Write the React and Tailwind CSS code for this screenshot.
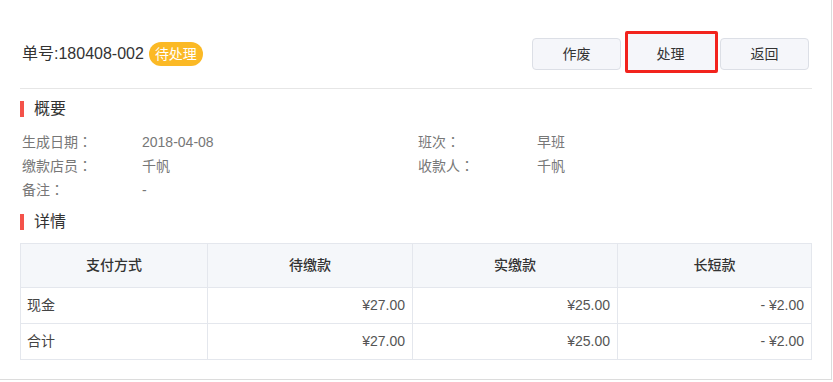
function Colon() {
  return <span className="[font-family:'Noto_Sans_CJK_TC',sans-serif]">：</span>;
}

export default function App() {
  const rows = [
    ["现金", "¥27.00", "¥25.00", "- ¥2.00"],
    ["合计", "¥27.00", "¥25.00", "- ¥2.00"],
  ];
  const headers = ["支付方式", "待缴款", "实缴款", "长短款"];
  return (
    <div className="w-[832px] h-[380px] bg-white border-r border-b border-[#dcdcdc] pl-[20px] [font-family:'Liberation_Sans','Noto_Sans_CJK_SC',sans-serif]">
      <div className="w-[792px]">
        {/* header */}
        <div className="pt-[38px] pb-[18px] border-b border-[#e6e6e6] flex items-center justify-between">
          <div className="flex items-center pl-[2px]">
            <span className="text-[16px] leading-[16px] text-[#333]">单号:180408-002</span>
            <span className="ml-[5px] h-[24px] w-[54px] rounded-full bg-[#fbb925] text-white text-[14px] flex items-center justify-center">
              待处理
            </span>
          </div>
          <div className="flex gap-[5px] mr-[3px]">
            <button className="w-[89px] h-[32px] rounded-[4px] border border-[#dcdfe6] bg-[#f5f6fa] text-[14px] text-[#333]">
              作废
            </button>
            <button className="relative w-[89px] h-[32px] rounded-[4px] border border-[#dcdfe6] bg-[#f5f6fa] text-[14px] text-[#333]">
              <span className="absolute left-[-2px] top-[-8px] w-[93px] h-[42px] rounded-[2px] border-[3px] border-[#f2231d] bg-[#f5f6fa]"></span>
              <span className="relative">处理</span>
            </button>
            <button className="w-[89px] h-[32px] rounded-[4px] border border-[#dcdfe6] bg-[#f5f6fa] text-[14px] text-[#333]">
              返回
            </button>
          </div>
        </div>

        {/* 概要 */}
        <div className="mt-[12px] h-[16px] flex items-center">
          <span className="w-[4px] h-[16px] bg-[#f4524a]"></span>
          <span className="ml-[10px] text-[16px] leading-[16px] text-[#333]">概要</span>
        </div>
        <div className="mt-[13px] grid grid-cols-[396px_396px] pl-[2px] text-[14px] text-[#777]">
          <div className="flex h-[24px] items-center">
            <span className="w-[120px]">生成日期<Colon /></span>
            <span>2018-04-08</span>
          </div>
          <div className="flex h-[24px] items-center">
            <span className="w-[119px]">班次<Colon /></span>
            <span>早班</span>
          </div>
          <div className="flex h-[24px] items-center">
            <span className="w-[120px]">缴款店员<Colon /></span>
            <span>千帆</span>
          </div>
          <div className="flex h-[24px] items-center">
            <span className="w-[119px]">收款人<Colon /></span>
            <span>千帆</span>
          </div>
          <div className="flex h-[24px] items-center">
            <span className="w-[120px]">备注<Colon /></span>
            <span>-</span>
          </div>
        </div>

        {/* 详情 */}
        <div className="mt-[12px] h-[16px] flex items-center">
          <span className="w-[4px] h-[16px] bg-[#f4524a]"></span>
          <span className="ml-[10px] text-[16px] leading-[16px] text-[#333]">详情</span>
        </div>

        <div className="mt-[13px] grid grid-cols-[187px_205px_205px_194px] border-l border-t border-[#e4e7ed] text-[14px]">
          {headers.map((h) => (
            <div
              key={h}
              className="h-[44px] flex items-center justify-center bg-[#f5f7fa] border-r border-b border-[#e4e7ed] text-[#333] font-medium"
            >
              {h}
            </div>
          ))}
          {rows.map((r, i) =>
            r.map((c, j) => (
              <div
                key={i + "-" + j}
                className={
                  j === 0
                    ? "h-[36px] flex items-center px-[6px] border-r border-b border-[#e4e7ed] text-[#444]"
                    : "h-[36px] flex items-center justify-end px-[7px] border-r border-b border-[#e4e7ed] text-[#555]"
                }
              >
                {c}
              </div>
            ))
          )}
        </div>
      </div>
    </div>
  );
}
